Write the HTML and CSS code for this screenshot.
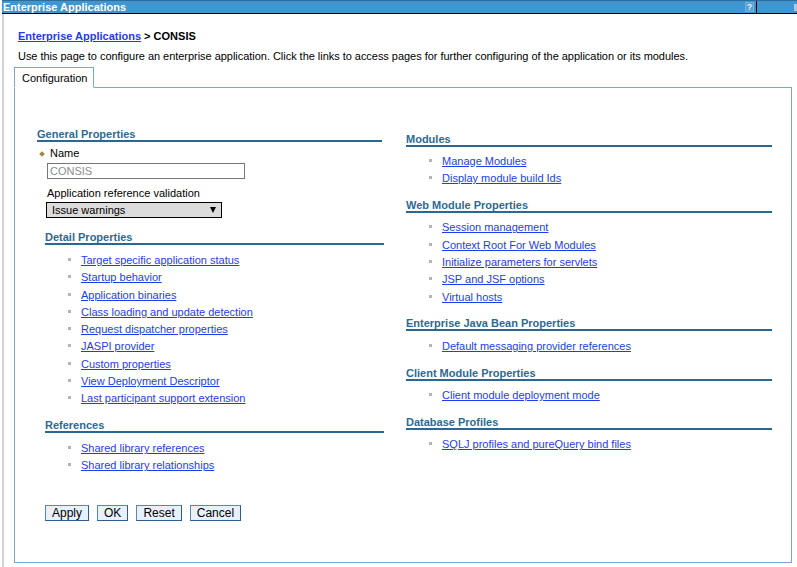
FILE: index.html
```html
<!DOCTYPE html>
<html>
<head>
<meta charset="utf-8">
<title>Enterprise Applications</title>
<link rel="stylesheet" href="styles.css">
</head>
<body>
<div class="titlebar">
  <div class="tb-main"><span class="tb-title">Enterprise Applications</span><span class="help">?</span></div>
  <div class="tb-side"><span class="tb-icon"></span></div>
</div>
<div class="page">
  <div class="crumb"><a href="#">Enterprise Applications</a> &gt; CONSIS</div>
  <p class="desc">Use this page to configure an enterprise application. Click the links to access pages for further configuring of the application or its modules.</p>
  <div class="tabs"><div class="tab">Configuration</div></div>
  <div class="panel">
    <div class="col-left">
      <div class="general">
        <h3 class="sect">General Properties</h3>
        <div class="field-label"><span class="req"></span>Name</div>
        <div class="input">CONSIS</div>
        <div class="label2">Application reference validation</div>
        <div class="select"><span>Issue warnings</span><span class="arrow"></span></div>
      </div>
      <div class="subs">
        <div class="block">
          <h3 class="sect">Detail Properties</h3>
          <ul class="links">
            <li><a href="#">Target specific application status</a></li>
            <li><a href="#">Startup behavior</a></li>
            <li><a href="#">Application binaries</a></li>
            <li><a href="#">Class loading and update detection</a></li>
            <li><a href="#">Request dispatcher properties</a></li>
            <li><a href="#">JASPI provider</a></li>
            <li><a href="#">Custom properties</a></li>
            <li><a href="#">View Deployment Descriptor</a></li>
            <li><a href="#">Last participant support extension</a></li>
          </ul>
        </div>
        <div class="block">
          <h3 class="sect">References</h3>
          <ul class="links">
            <li><a href="#">Shared library references</a></li>
            <li><a href="#">Shared library relationships</a></li>
          </ul>
        </div>
        <div class="buttons">
          <button class="btn">Apply</button>
          <button class="btn">OK</button>
          <button class="btn">Reset</button>
          <button class="btn">Cancel</button>
        </div>
      </div>
    </div>
    <div class="col-right">
      <div class="block">
        <h3 class="sect">Modules</h3>
        <ul class="links">
          <li><a href="#">Manage Modules</a></li>
          <li><a href="#">Display module build Ids</a></li>
        </ul>
      </div>
      <div class="block">
        <h3 class="sect">Web Module Properties</h3>
        <ul class="links">
          <li><a href="#">Session management</a></li>
          <li><a href="#">Context Root For Web Modules</a></li>
          <li><a href="#">Initialize parameters for servlets</a></li>
          <li><a href="#">JSP and JSF options</a></li>
          <li><a href="#">Virtual hosts</a></li>
        </ul>
      </div>
      <div class="block">
        <h3 class="sect">Enterprise Java Bean Properties</h3>
        <ul class="links">
          <li><a href="#">Default messaging provider references</a></li>
        </ul>
      </div>
      <div class="block">
        <h3 class="sect">Client Module Properties</h3>
        <ul class="links">
          <li><a href="#">Client module deployment mode</a></li>
        </ul>
      </div>
      <div class="block">
        <h3 class="sect">Database Profiles</h3>
        <ul class="links">
          <li><a href="#">SQLJ profiles and pureQuery bind files</a></li>
        </ul>
      </div>
    </div>
  </div>
</div>
</body>
</html>
```
FILE: styles.css
```css
html, body {
  margin: 0;
  padding: 0;
  background: #fff;
}
body {
  font-family: "Liberation Sans", Arial, sans-serif;
  font-size: 11px;
  color: #000;
  overflow: hidden;
}
a {
  color: #1d3de8;
  text-decoration: underline;
}

/* title bar */
.titlebar {
  display: flex;
  margin-left: 2px;
  height: 12px;
  border-top: 1px solid #2c6d9c;
  border-bottom: 1px solid #000;
  background: #3f96d1;
}
.tb-main {
  width: 755px;
  box-sizing: border-box;
  display: flex;
  align-items: center;
  justify-content: space-between;
  padding: 0 2px 0 1px;
  border-right: 1px solid #000;
}
.tb-title {
  color: #fff;
  font-weight: bold;
  font-size: 11px;
  line-height: 12px;
}
.help {
  width: 9px;
  height: 10px;
  box-sizing: border-box;
  background: #5d9fcf;
  border: 1px solid #6fb0de;
  color: #e8f2fa;
  font-weight: bold;
  font-size: 9px;
  line-height: 8px;
  text-align: center;
}
.tb-side {
  flex: 1;
  display: flex;
  justify-content: flex-end;
  align-items: center;
}
.tb-icon {
  width: 3px;
  height: 7px;
  background: #a6c8e4;
}

/* page */
.page {
  margin-left: 2px;
  border-left: 2px solid #d2d2d2;
  padding-left: 10px;
  min-height: 553px;
  box-sizing: border-box;
}
.crumb {
  margin-left: 4px;
  padding-top: 16px;
  font-weight: bold;
  line-height: 13px;
}
.desc {
  margin: 7px 0 0 4px;
  line-height: 13px;
  letter-spacing: -0.035px;
}
.tabs {
  display: flex;
  margin-top: 4px;
  margin-bottom: -1px;
  position: relative;
  z-index: 1;
}
.tab {
  width: 80px;
  box-sizing: border-box;
  height: 21px;
  padding: 4px 0 0 7px;
  line-height: 13px;
  border: 1px solid #7ba7d5;
  border-bottom: 1px solid #fff;
  background: #fff;
}
.panel {
  display: flex;
  width: 778px;
  height: 476px;
  box-sizing: border-box;
  border: 1px solid #7ba7d5;
}
.col-left {
  margin-left: 22px;
  width: 347px;
  padding-top: 39px;
}
.col-right {
  margin-left: 22px;
  width: 366px;
  padding-top: 43.5px;
}

/* section headings */
.sect {
  margin: 0;
  font-size: 11px;
  font-weight: bold;
  color: #2c6a95;
  line-height: 12px;
  padding-top: 1px;
  border-bottom: 2px solid #2a6793;
}
.general .sect {
  margin-right: 2px;
}
.field-label {
  margin-top: 5px;
  line-height: 13px;
  display: flex;
  align-items: center;
}
.req {
  width: 4px;
  height: 4px;
  background: #a8843f;
  transform: rotate(45deg);
  margin: 0 6px 0 3px;
}
.input {
  margin: 3px 0 0 10px;
  width: 198px;
  height: 16px;
  box-sizing: border-box;
  border: 1px solid #767676;
  color: #8c8c8c;
  padding-left: 2px;
  line-height: 14px;
}
.label2 {
  margin: 8px 0 0 10px;
  line-height: 13px;
}
.select {
  margin: 2px 0 0 9px;
  width: 176px;
  height: 16px;
  box-sizing: border-box;
  border: 1px solid #000;
  background: #dcdcdc;
  padding: 0 5px 0 5px;
  line-height: 14px;
  display: flex;
  justify-content: space-between;
  align-items: center;
}
.arrow {
  width: 0;
  height: 0;
  border-left: 3px solid transparent;
  border-right: 3px solid transparent;
  border-top: 6px solid #000;
}

.subs {
  margin-left: 8px;
  margin-top: 12px;
}
.subs .links {
  margin-top: 7px;
}
.block + .block {
  margin-top: 10.5px;
}
.links {
  list-style: none;
  margin: 6.4px 0 0;
  padding: 0;
}
.links li {
  height: 17.3px;
  line-height: 17.3px;
  white-space: nowrap;
}
.links li::before {
  content: "";
  display: inline-block;
  width: 3px;
  height: 3px;
  background: #b4b4b4;
  margin: 0 10px 0 23px;
  vertical-align: 3px;
}

/* buttons */
.buttons {
  margin-top: 30px;
  display: flex;
  gap: 8px;
}
.btn {
  font-family: "Liberation Sans", Arial, sans-serif;
  font-size: 12px;
  height: 16px;
  line-height: 14px;
  padding: 0 6px;
  margin: 0;
  background: #e8f1fb;
  border: 1px solid;
  border-color: #5b86b1 #2b5e8c #2b5e8c #5b86b1;
  border-radius: 0;
  color: #000;
}
```
